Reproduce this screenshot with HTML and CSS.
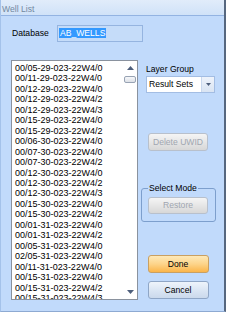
FILE: index.html
```html
<!DOCTYPE html>
<html>
<head>
<meta charset="utf-8">
<link rel="stylesheet" href="styles.css">
</head>
<body>
<div class="window">
  <div class="titlebar">Well List</div>
  <div class="db-row">
    <span class="lbl db-lbl">Database</span>
    <div class="textbox"><span class="sel">AB_WELLS</span></div>
  </div>
  <div class="main">
    <div class="listbox">
      <div class="items">
        <div>00/05-29-023-22W4/0</div>
        <div>00/11-29-023-22W4/0</div>
        <div>00/12-29-023-22W4/0</div>
        <div>00/12-29-023-22W4/2</div>
        <div>00/12-29-023-22W4/3</div>
        <div>00/15-29-023-22W4/0</div>
        <div>00/15-29-023-22W4/2</div>
        <div>00/06-30-023-22W4/0</div>
        <div>00/07-30-023-22W4/0</div>
        <div>00/07-30-023-22W4/2</div>
        <div>00/12-30-023-22W4/0</div>
        <div>00/12-30-023-22W4/2</div>
        <div>00/12-30-023-22W4/3</div>
        <div>00/15-30-023-22W4/0</div>
        <div>00/15-30-023-22W4/2</div>
        <div>00/01-31-023-22W4/0</div>
        <div>00/01-31-023-22W4/2</div>
        <div>00/05-31-023-22W4/0</div>
        <div>02/05-31-023-22W4/0</div>
        <div>00/11-31-023-22W4/0</div>
        <div>00/15-31-023-22W4/0</div>
        <div>00/15-31-023-22W4/2</div>
        <div>00/15-31-023-22W4/3</div>
      </div>
      <div class="scroll">
        <svg class="arrow up" width="7" height="4" viewBox="0 0 7 4"><polygon points="3.5,0 7,4 0,4" fill="#4e5f7c"/></svg>
        <div class="thumb"></div>
        <div class="spacer"></div>
        <svg class="arrow down" width="7" height="4" viewBox="0 0 7 4"><polygon points="0,0 7,0 3.5,4" fill="#4e5f7c"/></svg>
      </div>
    </div>
    <div class="right">
      <div class="lbl layer-lbl">Layer Group</div>
      <div class="combo">
        <span class="combo-text">Result Sets</span>
        <span class="combo-btn"><svg width="5" height="3" viewBox="0 0 5 3"><polygon points="0,0 5,0 2.5,3" fill="#4e5f7c"/></svg></span>
      </div>
      <div class="btn disabled delete">Delete UWID</div>
      <fieldset class="group">
        <legend class="lbl">Select Mode</legend>
        <div class="btn disabled restore">Restore</div>
      </fieldset>
      <div class="btn done">Done</div>
      <div class="btn cancel">Cancel</div>
    </div>
  </div>
</div>
</body>
</html>
```

FILE: styles.css
```css
html, body {
  margin: 0;
  padding: 0;
}
body {
  width: 226px;
  height: 312px;
  overflow: hidden;
  font-family: "Liberation Sans", Arial, sans-serif;
  font-size: 8.6px;
  color: #000;
}
.window {
  width: 226px;
  height: 312px;
  box-sizing: border-box;
  background: #c1dafb;
  border-left: 1px solid #a4c2ea;
  border-right: 2px solid #56677f;
  border-bottom: 1px solid #8eaad2;
}
.titlebar {
  height: 16px;
  line-height: 16px;
  padding-left: 1px;
  padding-top: 1px;
  box-sizing: border-box;
  color: #72889f;
  background: linear-gradient(#e1ecfa, #d0e2f8);
  border-bottom: 1px solid #93b3e2;
}
.db-row {
  display: flex;
  align-items: center;
  margin-top: 9px;
  padding-left: 11px;
}
.db-lbl {
  width: 45px;
}
.textbox {
  width: 86px;
  height: 17px;
  box-sizing: border-box;
  border: 1px solid #95b4e0;
  background: #c5dcf9;
  padding: 2px 0 0 1px;
  line-height: 10px;
}
.sel {
  display: inline-block;
  background: #3399ff;
  color: #fff;
  padding: 0 1px;
  height: 10px;
}
.main {
  display: flex;
  margin-top: 18px;
  padding-left: 10px;
}
.listbox {
  width: 127px;
  height: 240px;
  box-sizing: border-box;
  border: 1px solid #8a929e;
  background: #fff;
  display: flex;
  overflow: hidden;
}
.items {
  flex: 1;
  padding: 2px 0 0 3px;
  font-size: 9px;
  line-height: 10.45px;
  white-space: nowrap;
  overflow: hidden;
}
.scroll {
  width: 15px;
  display: flex;
  flex-direction: column;
  align-items: center;
  padding-top: 5px;
  padding-bottom: 5px;
  box-sizing: border-box;
}
.arrow {
  display: block;
  margin-left: 1px;
}
.thumb {
  width: 12px;
  height: 7px;
  box-sizing: border-box;
  margin-top: 6px;
  margin-left: 1px;
  border: 1px solid #98a3b4;
  border-radius: 2px;
  background: linear-gradient(#f7f8fa, #dde1e7);
}
.spacer {
  flex: 1;
}
.right {
  display: flex;
  flex-direction: column;
  margin-left: 3px;
  width: 75px;
}
.lbl {
  line-height: 11px;
}
.layer-lbl {
  margin-top: 3.5px;
  padding-left: 5px;
}
.combo {
  margin-top: 1.5px;
  margin-left: 5px;
  width: 69px;
  height: 17px;
  box-sizing: border-box;
  border: 1px solid #a3bde3;
  background: #fff;
  display: flex;
  align-items: stretch;
}
.combo-text {
  flex: 1;
  padding-left: 2px;
  line-height: 15px;
}
.combo-btn {
  width: 12px;
  display: flex;
  align-items: center;
  justify-content: center;
  background: linear-gradient(#eef3fb, #d9e4f3);
  border-left: 1px solid #c9d8ee;
}
.btn {
  width: 60px;
  height: 18px;
  box-sizing: border-box;
  margin-left: 7px;
  border-radius: 3px;
  text-align: center;
  line-height: 16px;
}
.disabled {
  color: #a0a6b0;
  border: 1px solid #b8c0cc;
  background: linear-gradient(#f5f5f5, #e6e6e6 50%, #d7d7d7);
}
.delete {
  margin-top: 40px;
}
.group {
  margin: 31.5px 0 0 0;
  padding: 0 6px 7px 6px;
  width: 75px;
  box-sizing: border-box;
  border: 1px solid #7d9fcd;
  border-radius: 3px;
  min-width: 0;
}
.group legend {
  padding: 0 1px;
  margin-left: 0;
}
.restore {
  margin: 3.5px 0 0 0;
  height: 17px;
  line-height: 15px;
}
.done {
  margin-top: 33px;
  width: 61px;
  margin-left: 6.5px;
  border: 1px solid #c9a062;
  background: linear-gradient(#fee9b8, #fdd48a 50%, #fbb54a);
}
.cancel {
  margin-top: 8px;
  width: 61px;
  margin-left: 6.5px;
  border: 1px solid #8fa6c6;
  background: linear-gradient(#eef4fb, #dbe6f4 50%, #cbd9ec);
}
```
